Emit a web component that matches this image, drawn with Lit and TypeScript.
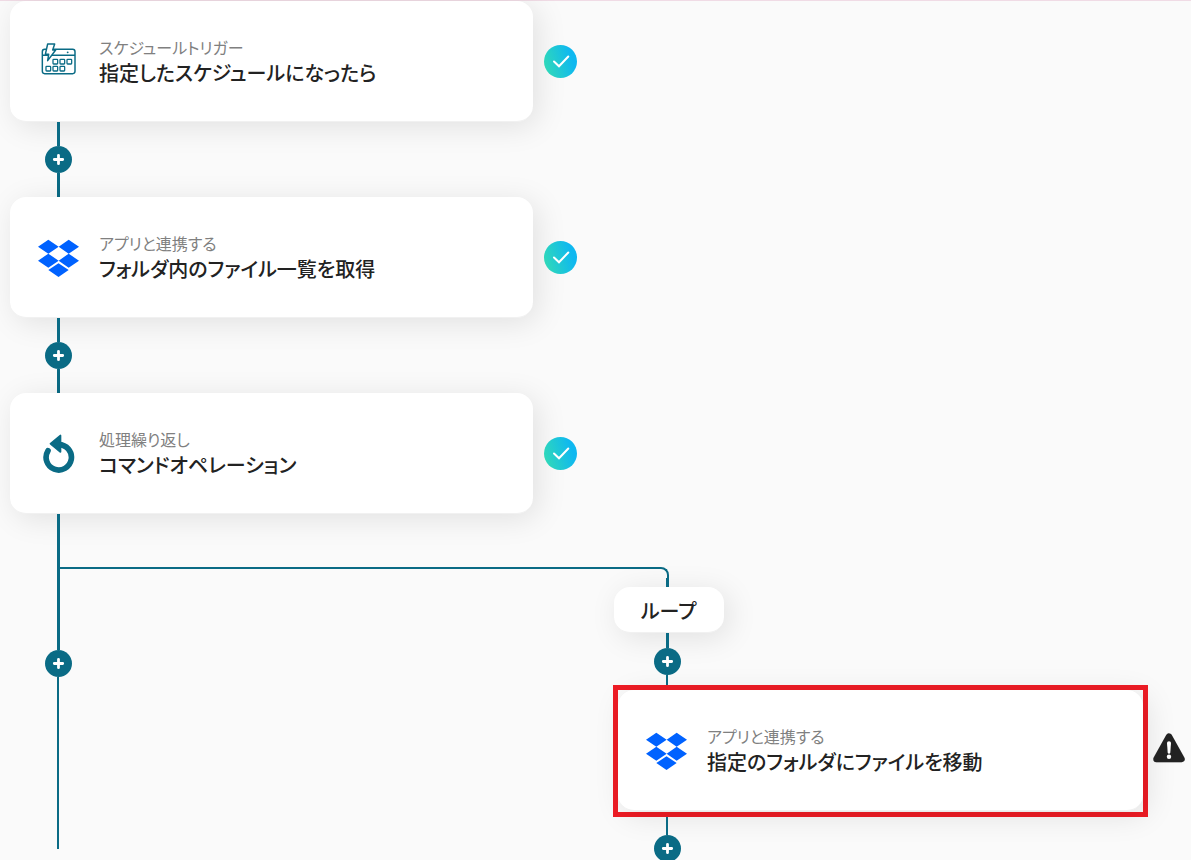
import { LitElement, html, css, svg } from "lit";
import { customElement, property } from "lit/decorators.js";

type IconName = "schedule" | "dropbox" | "repeat";

interface Step {
  icon: IconName;
  kind: string;
  title: string;
}

const STEPS: Step[] = [
  { icon: "schedule", kind: "スケジュールトリガー", title: "指定したスケジュールになったら" },
  { icon: "dropbox", kind: "アプリと連携する", title: "フォルダ内のファイル一覧を取得" },
  { icon: "repeat", kind: "処理繰り返し", title: "コマンドオペレーション" },
];

const LOOP_STEP: Step = {
  icon: "dropbox",
  kind: "アプリと連携する",
  title: "指定のフォルダにファイルを移動",
};

const cell = (x: number, y: number) => svg`<rect x=${x} y=${y} width="14" height="14" rx="2" />`;

const ICONS = {
  schedule: html`<svg width="37" height="38" viewBox="59 36 111 114" aria-hidden="true">
    <g fill="none" stroke="#0a6b85" stroke-width="4.4" stroke-linejoin="round">
      <rect x="66" y="58" width="98" height="73" rx="7" />
      <path d="M66 76H164" />
      <g stroke-width="3.8">
        ${cell(98, 88)}${cell(119, 88)}${cell(140, 88)}
        ${cell(77, 109)}${cell(98, 109)}${cell(119, 109)}
      </g>
      <path d="M82 42H103L97 60H106L82 92L85 73H75Z" fill="#fff" />
    </g>
    <circle cx="142" cy="67" r="2.8" fill="#0a6b85" />
  </svg>`,
  dropbox: html`<svg width="41" height="42" viewBox="54 34 123 126" aria-hidden="true">
    <path
      fill="#0062ff"
      d="M85 45L116 66L85 87L54 66ZM146 45L177 66L146 87L116 66ZM85 87L116 108L85 129L54 108ZM146 87L177 108L146 129L116 108ZM115.500 116L146 136L115.500 157L85 136Z"
    />
  </svg>`,
  repeat: html`<svg width="32" height="39" viewBox="68 42 96 117" aria-hidden="true">
    <path d="M115 74A38 38 0 1 1 83 92" fill="none" stroke="#0a6b85" stroke-width="17" stroke-linecap="round" />
    <path d="M91 71L120 47V95Z" fill="#0a6b85" stroke="#0a6b85" stroke-width="6" stroke-linejoin="round" />
  </svg>`,
};

@customElement("flow-card")
export class FlowCard extends LitElement {
  @property({ attribute: false }) step!: Step;

  static styles = css`
    :host {
      display: block;
      flex: 1;
      min-width: 0;
    }
    .card {
      display: flex;
      align-items: center;
      gap: 20px;
      padding: 34px 28px;
      border-bottom: 1px solid #f1f1f1;
      border-radius: 16px;
      background: #fff;
      box-shadow: 5px 5px 30px rgba(0, 0, 0, 0.1);
    }
    .icon {
      display: flex;
      justify-content: center;
      flex: none;
      width: 41px;
    }
    .icon svg {
      display: block;
    }
    .kind,
    .title {
      margin: 0;
    }
    .kind {
      font-size: 16px;
      line-height: 24px;
      color: #808080;
    }
    .title {
      font-size: 20px;
      line-height: 28px;
      font-weight: 500;
      color: #222;
    }
  `;

  render() {
    return html`<article class="card">
      <span class="icon">${ICONS[this.step.icon]}</span>
      <div>
        <p class="kind">${this.step.kind}</p>
        <h2 class="title">${this.step.title}</h2>
      </div>
    </article>`;
  }
}

@customElement("add-button")
export class AddButton extends LitElement {
  static styles = css`
    :host {
      display: block;
      flex: none;
    }
    .add {
      display: block;
      width: 27px;
      height: 27px;
      padding: 0;
      border: 0;
      border-radius: 50%;
      background: #0a6b85;
      cursor: pointer;
    }
    .add svg {
      display: block;
    }
  `;

  render() {
    return html`<button class="add" type="button" aria-label="ステップを追加">
      <svg width="27" height="27" viewBox="0 0 27 27" aria-hidden="true">
        <path d="M13.500 9.300V17.700M9.300 13.500H17.700" stroke="#fff" stroke-width="2.800" stroke-linecap="round" />
      </svg>
    </button>`;
  }
}

@customElement("app-root")
export class AppRoot extends LitElement {
  static styles = css`
    :host {
      display: block;
      height: 100vh;
      overflow: hidden;
      background: #fafafa;
      font-family: "Noto Sans CJK JP", sans-serif;
      font-feature-settings: "palt";
      color: #222;
    }
    .flow {
      padding: 0 6px 0 10px;
      border-top: 1px solid #f0dbe5;
    }
    .step {
      display: flex;
      align-items: center;
      gap: 11px;
      max-width: 567px;
    }
    .status {
      display: block;
      flex: none;
    }
    .connector {
      display: flex;
      flex-direction: column;
      align-items: center;
      width: 27px;
      margin-left: 35px;
    }
    .line {
      box-sizing: border-box;
      width: 3px;
      border-left: 3px solid #0a6b85;
    }
    .thin {
      border-left-width: 2px;
    }
    .above,
    .below {
      height: 24px;
    }
    .fork {
      display: grid;
      grid-template-columns: 63px minmax(0, 1fr);
      align-items: start;
    }
    .trunk {
      height: 136px;
    }
    .tail {
      height: 172px;
    }
    .elbow {
      box-sizing: border-box;
      width: 609px;
      height: 11px;
      margin: 53px 0 0 -13px;
      border-top: 2px solid #0a6b85;
      border-right: 2px solid #0a6b85;
      border-top-right-radius: 8px;
    }
    .loop {
      padding-left: 540px;
    }
    .joint {
      margin-left: 41px;
    }
    .drop {
      height: 9px;
    }
    .link {
      height: 15px;
    }
    .short {
      height: 10px;
    }
    .exit {
      height: 18px;
    }
    .label {
      width: fit-content;
      margin: 0 0 0 1px;
      padding: 10px 27px 7px;
      border-bottom: 1px solid #f1f1f1;
      border-radius: 16px;
      background: #fff;
      box-shadow: 5px 5px 30px rgba(0, 0, 0, 0.1);
      font-size: 20px;
      line-height: 28px;
      font-weight: 500;
    }
    .failed {
      display: flex;
      align-items: center;
      gap: 5px;
    }
    .frame {
      flex: 1;
      max-width: 525px;
      padding-bottom: 1px;
      border: 5px solid #ee1c25;
    }
  `;

  private done() {
    return html`<svg class="status" width="33" height="33" viewBox="0 0 33 33" role="img" aria-label="成功">
      <defs>
        <linearGradient id="ok" x1="0" y1="0.650" x2="1" y2="0.350">
          <stop offset="0" stop-color="#30d9b8" />
          <stop offset="0.850" stop-color="#0fb8f0" />
        </linearGradient>
      </defs>
      <circle cx="16.500" cy="16.500" r="16.500" fill="url(#ok)" />
      <path d="M10 16.500L15 21.300L24.300 11.500" fill="none" stroke="#fff" stroke-width="2" stroke-linecap="round" />
    </svg>`;
  }

  private warning() {
    return html`<svg class="status" width="32" height="36" viewBox="0 0 32 36" role="img" aria-label="エラー">
      <path d="M16 4L28.500 26H3.500Z" fill="#000" opacity="0.120" stroke="#000" stroke-width="7" stroke-linejoin="round" />
      <path d="M16 3.500L28.500 26H3.500Z" fill="#222" stroke="#222" stroke-width="6.400" stroke-linejoin="round" />
      <path d="M14 10Q14 8.300 16 8.300T18 10L17.300 19.500Q17 20.700 16 20.700T14.700 19.500Z" fill="#fff" />
      <circle cx="16" cy="23.800" r="2.200" fill="#fff" />
    </svg>`;
  }

  render() {
    return html`<main class="flow">
      ${STEPS.map(
        (step, i) => html`
          <div class="step"><flow-card .step=${step}></flow-card>${this.done()}</div>
          ${i < STEPS.length - 1
            ? html`<div class="connector">
                <span class="line above"></span><add-button></add-button><span class="line below"></span>
              </div>`
            : ""}
        `
      )}
      <div class="fork">
        <div class="connector">
          <span class="line trunk"></span><add-button></add-button><span class="line thin tail"></span>
        </div>
        <div>
          <div class="elbow"></div>
          <section class="loop">
            <div class="connector joint"><span class="line drop"></span></div>
            <p class="label">ループ</p>
            <div class="connector joint">
              <span class="line link"></span><add-button></add-button><span class="line thin short"></span>
            </div>
            <div class="failed">
              <div class="frame"><flow-card .step=${LOOP_STEP}></flow-card></div>
              ${this.warning()}
            </div>
            <div class="connector joint">
              <span class="line thin exit"></span><add-button></add-button>
            </div>
          </section>
        </div>
      </div>
    </main>`;
  }
}
